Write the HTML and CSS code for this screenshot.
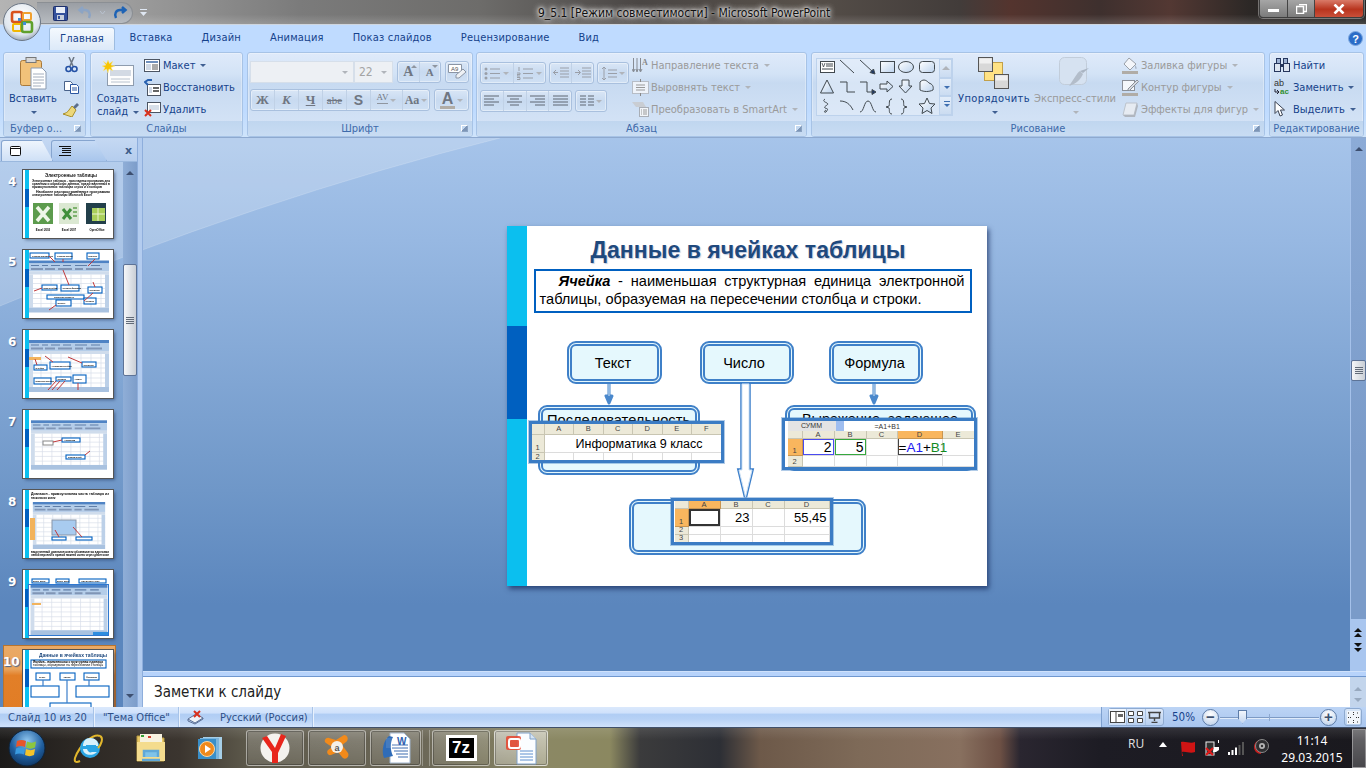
FILE: index.html
```html
<!DOCTYPE html>
<html lang="ru">
<head>
<meta charset="utf-8">
<title>9_5.1 [Режим совместимости] - Microsoft PowerPoint</title>
<link rel="stylesheet" href="styles.css">
</head>
<body>
<svg class="defs" width="0" height="0">
  <defs>
    <symbol id="mw" viewBox="0 0 80 52">
      <rect width="80" height="52" fill="#fff"/>
      <rect width="80" height="3" fill="#4f83c4"/>
      <rect y="3" width="80" height="8" fill="#b4cde9"/>
      <path d="M2 5h8M13 5h6M22 5h9M34 5h8M46 5h12M62 5h9" stroke="#5f7ea8" stroke-width="1.200"/>
      <path d="M2 8.500h12M16 8.500h10M29 8.500h14M46 8.500h8M57 8.500h16" stroke="#8095b5" stroke-width="2"/>
      <rect y="11" width="80" height="3" fill="#cfdcec"/>
      <rect y="14" width="4" height="33" fill="#cfdcec"/>
      <path d="M4 18H80M4 23H80M4 28H80M4 33H80M4 38H80M4 43H80M12 14V47M22 14V47M32 14V47M42 14V47M52 14V47M62 14V47M72 14V47" stroke="#d6dde8" stroke-width=".7"/>
      <rect x="76" y="14" width="4" height="33" fill="#bcd0e8"/>
      <rect y="47" width="80" height="5" fill="#a9c2e0"/>
    </symbol>
    <symbol id="bar" viewBox="0 0 4 68">
      <rect width="4" height="68" fill="#0bbfef"/>
      <rect y="19" width="4" height="18" fill="#0060c0"/>
    </symbol>
  </defs>
</svg>
<div class="app">
  <header class="titlebar">
    <div class="office-btn">
      <svg width="38" height="38" viewBox="0 0 38 38">
        <defs><radialGradient id="orb" cx=".5" cy=".35" r=".7"><stop offset="0" stop-color="#fff"/><stop offset=".7" stop-color="#dfe6ee"/><stop offset="1" stop-color="#8b98a8"/></radialGradient></defs>
        <circle cx="19" cy="19" r="18.500" fill="url(#orb)" stroke="#6b7685"/>
        <rect x="9" y="9" width="10" height="10" rx="2" fill="none" stroke="#d9531e" stroke-width="2.600"/>
        <rect x="20" y="10" width="8" height="7" rx="1" fill="none" stroke="#f0a030" stroke-width="2"/>
        <rect x="10" y="21" width="8" height="7" rx="1" fill="none" stroke="#f2b700" stroke-width="2"/>
        <rect x="19" y="19" width="10" height="10" rx="2" fill="none" stroke="#5fa02c" stroke-width="2.600"/>
        <path d="M20 19h3v3h-3zM15 15h3v3h-3z" fill="#3f8fd8"/>
      </svg>
    </div>
    <div class="qat">
      <svg width="15" height="15" viewBox="0 0 15 15"><rect x=".5" y=".5" width="14" height="14" rx="1" fill="#35519c" stroke="#1d2f6b"/><rect x="3" y="1" width="9" height="6" fill="#e9eef7"/><rect x="4" y="9" width="7" height="5" fill="#c8cfdc"/><rect x="5" y="10" width="2" height="3" fill="#35519c"/></svg>
      <svg class="q-undo" width="15" height="14" viewBox="0 0 15 14"><path d="M12 12c2-4 0-8-4-8H3M6 1 2.500 4 6 7" fill="none" stroke="#8ca4c4" stroke-width="2.500"/></svg>
      <svg width="7" height="4" viewBox="0 0 7 4"><path d="M1 0 3.500 3 6 0" fill="none" stroke="#b9c2cf"/></svg>
      <svg class="q-redo" width="15" height="14" viewBox="0 0 15 14"><path d="M3 12C1 8 3 4 7 4h5M9 1l3.500 3L9 7" fill="none" stroke="#1e63b5" stroke-width="2.500"/></svg>
    </div>
    <svg class="q-more" width="7" height="7" viewBox="0 0 7 7"><path d="M0 0h7v1H0zM0 3h7L3.500 7z" fill="#dfe7f2"/></svg>
    <div class="title">9_5.1 [Режим совместимости] - Microsoft PowerPoint</div>
    <div class="winctl">
      <span class="wc wc-min"><i class="wc-dash"></i></span>
      <span class="wc wc-max"><svg width="11" height="10" viewBox="0 0 11 10"><path d="M3 .5h7.500v7H8M.5 2.500h7v7h-7z" fill="none" stroke="#fff" stroke-width="1.500"/></svg></span>
      <span class="wc wc-close"><svg width="12" height="10" viewBox="0 0 12 10"><path d="M1.500 .5 10.500 9.500M10.500 .5 1.500 9.500" stroke="#fff" stroke-width="2.600"/></svg></span>
    </div>
  </header>

  <nav class="tabs">
    <span class="tab active">Главная</span>
    <span class="tab">Вставка</span>
    <span class="tab">Дизайн</span>
    <span class="tab">Анимация</span>
    <span class="tab">Показ слайдов</span>
    <span class="tab">Рецензирование</span>
    <span class="tab">Вид</span>
    <svg class="help" width="15" height="15" viewBox="0 0 15 15"><circle cx="7.500" cy="7.500" r="7" fill="#2a6cc8" stroke="#7fa8de"/><text x="7.500" y="11.500" text-anchor="middle" class="help-q">?</text></svg>
  </nav>

  <section class="ribbon">
    <div class="group g-clip">
      <div class="g-body">
        <div class="big b-paste">
          <div class="big-ico"><svg width="27" height="33" viewBox="0 0 27 33"><rect x=".5" y="3.500" width="21" height="25" rx="2" fill="#f1c27a" stroke="#a9793a"/><rect x="6" y=".5" width="10" height="5" fill="#d7d7d7" stroke="#777"/><path d="M11 11h11l4 4v17H11z" fill="#fff" stroke="#8a9ab0"/><path d="M13 17h11M13 20h11M13 23h11M13 26h11M13 29h8" stroke="#a4aebd"/></svg></div>
          <div class="big-text dk">Вставить</div>
          <div class="big-text"><i class="caret"></i></div>
        </div>
        <div class="icol">
          <span class="ico22"><svg width="13" height="16" viewBox="0 0 13 16"><path d="M4 0l4 9M9 0 5 9" stroke="#6c7684" stroke-width="1.500"/><circle cx="3.500" cy="12" r="2.500" fill="none" stroke="#2552a5" stroke-width="1.600"/><circle cx="9.500" cy="12" r="2.500" fill="none" stroke="#2552a5" stroke-width="1.600"/></svg></span>
          <span class="ico22"><svg width="15" height="13" viewBox="0 0 15 13"><path d="M.5.5h6l2 2v7h-8z" fill="#fff" stroke="#49628a"/><path d="M6.500 3.500h6l2 2v7h-8z" fill="#fff" stroke="#2c56a0"/><path d="M8 7h5M8 9h5" stroke="#2c56a0"/></svg></span>
          <span class="ico22"><svg width="16" height="15" viewBox="0 0 16 15"><path d="M10 5 14 1l2 2-4 4z" fill="#5b6e8c"/><path d="M9 4l4 4-4 7-9-3c3-1 5-2 6-4z" fill="#ecd77a" stroke="#a98f2c"/></svg></span>
        </div>
      </div>
      <div class="g-label">Буфер о...<i class="launch"></i></div>
    </div>

    <div class="group g-slides">
      <div class="g-body">
        <div class="big b-new">
          <div class="big-ico"><svg width="32" height="26" viewBox="0 0 32 26"><rect x="5.500" y="5.500" width="26" height="20" fill="#fdfdfd" stroke="#8e9cae"/><rect x="8" y="10" width="21" height="6" fill="#d3dae4"/><path d="M9 19h19M9 22h19" stroke="#b8c2ce"/><path d="M6 0l1.500 3.500L11 1 9 5l4 1-4 1.500L11 11 7 9 6 13 4.500 9 1 11l2-3.500L0 6l4-1L1 1l3.500 2.500z" fill="#f7c400" stroke="#f2e9a6" stroke-width=".5"/></svg></div>
          <div class="big-text dk">Создать</div>
          <div class="big-text dk">слайд <i class="caret"></i></div>
        </div>
        <div class="scol">
          <div class="sm dk"><span class="sm-ico"><svg width="16" height="13" viewBox="0 0 16 13"><rect x=".5" y=".5" width="15" height="12" fill="#fff" stroke="#4c5563"/><rect x="2" y="2" width="12" height="2" fill="#6e8fbd"/><rect x="2" y="5" width="5" height="6" fill="#cfd8e5"/><path d="M8 6h6M8 8h6M8 10h6" stroke="#555"/></svg></span>Макет <i class="caret"></i></div>
          <div class="sm dk"><span class="sm-ico"><svg width="17" height="17" viewBox="0 0 17 17"><rect x="3.500" y="5.500" width="13" height="11" fill="#fff" stroke="#4c5563"/><rect x="9" y="8" width="6" height="2" fill="#666"/><rect x="9" y="11" width="6" height="2" fill="#666"/><rect x="5" y="8" width="3" height="6" fill="#cfd8e5"/><path d="M8 1H4L1 3l3 3" fill="none" stroke="#2760b0" stroke-width="2"/></svg></span>Восстановить</div>
          <div class="sm dk"><span class="sm-ico"><svg width="17" height="15" viewBox="0 0 17 15"><rect x="3.500" y=".5" width="13" height="10" fill="#fff" stroke="#4c5563"/><rect x="5" y="3" width="10" height="5" fill="#d7dfe9"/><path d="M1 8l6 6M7 8l-6 6" stroke="#d8301c" stroke-width="2"/></svg></span>Удалить</div>
        </div>
      </div>
      <div class="g-label">Слайды</div>
    </div>

    <div class="group g-font">
      <div class="g-body rows">
        <div class="row">
          <span class="combo c-name"><i class="caret gr"></i></span>
          <span class="combo c-size">22<i class="caret gr"></i></span>
          <span class="bgrp bg-grow"><span class="btn f-a1">A<i class="up"></i></span><span class="btn f-a2">A<i class="up dn"></i></span></span>
          <span class="bgrp bg-clear"><span class="btn"><svg width="19" height="16" viewBox="0 0 19 16"><path d="M.5.5h13v8h-13z" fill="#fff" stroke="#8b95a4"/><text x="3" y="7" class="mini-a">A9</text><path d="M8 11 15 5l3 3-7 6H8z" fill="#eef1f5" stroke="#8b95a4"/></svg></span></span>
        </div>
        <div class="row">
          <span class="bgrp bg-fmt">
            <span class="btn w24 fb">Ж</span><span class="btn w24 fbi">К</span><span class="btn w24 fu">Ч</span><span class="btn w24 fs">abe</span><span class="btn w24 fb2">S</span>
            <span class="btn w32"><span class="fav">AV<i class="av"></i></span><i class="caret gr"></i></span><span class="btn w28 fa">Aa<i class="caret gr"></i></span>
          </span>
          <span class="bgrp bg-color"><span class="btn"><span class="fcol">A</span><i class="caret gr"></i></span></span>
        </div>
      </div>
      <div class="g-label">Шрифт<i class="launch"></i></div>
    </div>

    <div class="group g-para">
      <div class="g-body para">
        <div class="rows">
          <div class="row rp">
            <span class="bgrp bg-list">
              <span class="btn w33"><svg width="17" height="13" viewBox="0 0 17 13"><path d="M6 2h10M6 6.500h10M6 11h10" stroke="#9a9fa8"/><circle cx="2" cy="2" r="1.500" fill="#9a9fa8"/><circle cx="2" cy="6.500" r="1.500" fill="#9a9fa8"/><circle cx="2" cy="11" r="1.500" fill="#9a9fa8"/></svg><i class="caret gr"></i></span>
              <span class="btn w33"><svg width="17" height="13" viewBox="0 0 17 13"><path d="M6 2h10M6 6.500h10M6 11h10" stroke="#9a9fa8"/><path d="M2 0v4M0 6h3v1.500H0V9h3M0 10.500h3v2H0" fill="none" stroke="#9a9fa8"/></svg><i class="caret gr"></i></span>
            </span>
            <span class="bgrp bg-ind">
              <span class="btn"><svg width="16" height="13" viewBox="0 0 16 13"><path d="M7 1h9M7 4h9M7 7h9M7 10h9M0 5.500h5M3 3 .5 5.500 3 8" fill="none" stroke="#9a9fa8"/></svg></span>
              <span class="btn"><svg width="16" height="13" viewBox="0 0 16 13"><path d="M7 1h9M7 4h9M7 7h9M7 10h9M0 5.500h5M3 3l2.500 2.500L3 8" fill="none" stroke="#9a9fa8"/></svg></span>
            </span>
            <span class="bgrp bg-ls"><span class="btn"><svg width="16" height="15" viewBox="0 0 16 15"><path d="M3 1v13M1 3l2-2 2 2M1 12l2 2 2-2M7 4h9M7 7.500h9M7 11h9" fill="none" stroke="#9a9fa8"/></svg><i class="caret gr"></i></span></span>
          </div>
          <div class="row rp">
            <span class="bgrp bg-align">
              <span class="btn"><svg width="15" height="12" viewBox="0 0 15 12"><path d="M0 1h15M0 4h10M0 7h15M0 10h10" stroke="#5f6672"/></svg></span>
              <span class="btn"><svg width="15" height="12" viewBox="0 0 15 12"><path d="M0 1h15M3 4h9M0 7h15M3 10h9" stroke="#5f6672"/></svg></span>
              <span class="btn"><svg width="15" height="12" viewBox="0 0 15 12"><path d="M0 1h15M5 4h10M0 7h15M5 10h10" stroke="#5f6672"/></svg></span>
              <span class="btn"><svg width="15" height="12" viewBox="0 0 15 12"><path d="M0 1h15M0 4h15M0 7h15M0 10h15" stroke="#5f6672"/></svg></span>
            </span>
            <span class="bgrp bg-cols"><span class="btn"><svg width="14" height="12" viewBox="0 0 14 12"><path d="M0 1h6M0 4h6M0 7h6M0 10h6M8 1h6M8 4h6M8 7h6M8 10h6" stroke="#5f6672"/></svg><i class="caret gr"></i></span></span>
          </div>
        </div>
        <div class="scol sc-p">
          <div class="sm dis"><span class="sm-ico"><svg width="17" height="17" viewBox="0 0 17 17"><path d="M1.500 1v13M5 1v13M8.500 1v13M0 12l1.500 3L3 12M4 12l1 3 1-3M7 12l1.500 3L10 12" fill="none" stroke="#878c94"/><text x="10" y="8" class="mini-b">A</text></svg></span>Направление текста <i class="caret gr"></i></div>
          <div class="sm dis"><span class="sm-ico"><svg width="17" height="17" viewBox="0 0 17 17"><rect x=".5" y="2.500" width="16" height="12" fill="#eef3fa" stroke="#b7bdc6"/><path d="M4 6h9M4 8.500h9M4 11h9" stroke="#999"/><path d="M8.500 0v3M8.500 14v3" stroke="#888"/></svg></span>Выровнять текст <i class="caret gr"></i></div>
          <div class="sm dis"><span class="sm-ico"><svg width="17" height="16" viewBox="0 0 17 16"><path d="M0 1h11l3 5H4z" fill="#c9cdd3"/><rect x="7.500" y="6.500" width="9" height="9" fill="#f2f5f9" stroke="#a9aeb6"/><path d="M9 9h1M11 9h4M9 11h1M11 11h4M9 13h1M11 13h4" stroke="#999"/></svg></span>Преобразовать в SmartArt <i class="caret gr"></i></div>
        </div>
      </div>
      <div class="g-label">Абзац<i class="launch"></i></div>
    </div>

    <div class="group g-draw">
      <div class="g-body draw">
        <div class="gallery">
          <svg width="123" height="58" viewBox="0 0 123 58" class="shapes">
            <g fill="none" stroke="#41494f">
              <rect x="4.500" y="3.500" width="14" height="11" fill="#fff"/><path d="M10 6h7M10 8h7M6 11h11" /><path d="M6 5l1.500 4L9 5" stroke-width=".8"/>
              <path d="M24 2l14 13"/><path d="M44 2l13 12"/><path d="M59 16l-5-1.500 3.500-3.500z" fill="#1f3864"/>
              <defs><linearGradient id="fl" x1="0" y1="0" x2="1" y2="1"><stop offset="0" stop-color="#fff"/><stop offset="1" stop-color="#bcd3ee"/></linearGradient></defs>
              <rect x="64.500" y="3.500" width="14" height="11" fill="url(#fl)"/>
              <ellipse cx="90" cy="9" rx="7.500" ry="5.500" fill="url(#fl)"/>
              <rect x="103.500" y="3.500" width="15" height="11" rx="3" fill="url(#fl)"/>
              <path d="M11 22l6.500 13h-13z" fill="url(#fl)"/>
              <path d="M24 24h7v10h8"/><path d="M44 24h7v10h6"/><path d="M60 34l-4-2.500v5z" fill="#1f3864"/>
              <path d="M64 26h7v-3l6 5.500-6 5.500v-3h-7z" fill="url(#fl)"/>
              <path d="M86 22h7v6h3l-6.500 7-6.500-7h3z" fill="url(#fl)"/>
              <path d="M104 24c4-4 7-1 9 1 3 1 5 3 4 7-4 2-9 2-13 0z" fill="url(#fl)"/>
              <path d="M9 41c-3 2 0 3 2 4 3 2-4 3-2 5 2 1 4 0 1 4-2 1-2-1 0-2" />
              <path d="M24 43c6 0 10 3 13 9"/><path d="M44 54c4 0 4-11 8-11 4 0 4 11 8 11"/>
              <path d="M76 41c-4 0-2 6-3 7l-3 1 3 1c1 1-1 6 3 6"/><path d="M85 41c4 0 2 6 3 7l3 1-3 1c-1 1 1 6-3 6"/>
              <path d="M111 40l2.500 5.500 5.500.5-4 4 1 5.500-5-3-5 3 1-5.500-4-4 5.500-.5z" fill="url(#fl)"/>
            </g>
          </svg>
          <div class="gscroll"><span class="gs"><i class="up2"></i></span><span class="gs"><i class="caret bl"></i></span><span class="gs"><i class="caret bl barred"></i></span></div>
        </div>
        <div class="big b-arr">
          <div class="big-ico"><svg width="32" height="32" viewBox="0 0 32 32"><rect x="6.500" y="5.500" width="18" height="18" fill="#ffe284" stroke="#c2a04a"/><rect x=".5" y=".5" width="14" height="14" fill="#d8d8d8" stroke="#555"/><rect x="1.500" y="1.500" width="12" height="5" fill="#f0f0f0"/><rect x="16.500" y="17.500" width="14" height="14" fill="#d8d8d8" stroke="#555"/><rect x="17.500" y="18.500" width="12" height="5" fill="#f0f0f0"/></svg></div>
          <div class="big-text dk">Упорядочить</div>
          <div class="big-text"><i class="caret"></i></div>
        </div>
        <div class="big b-sty dis">
          <div class="big-ico"><svg width="32" height="32" viewBox="0 0 32 32"><rect x=".5" y=".5" width="27" height="27" rx="5" fill="#d6e2f1" stroke="#c2cdda"/><path d="M30 11 24 16l-3-2z" fill="#a9b4c2"/><path d="M21 14l3 3c-2 5-7 10-14 12 2-3 4-6 6-9 2-3 3-5 5-6z" fill="#b3bdca"/></svg></div>
          <div class="big-text">Экспресс-стили</div>
          <div class="big-text"><i class="caret gr"></i></div>
        </div>
        <div class="scol sc-d">
          <div class="sm dis"><span class="sm-ico si16"><svg width="17" height="17" viewBox="0 0 17 17"><path d="M7 1l7 6-6 6-6-6z" fill="#f4f6fa" stroke="#9aa0a8"/><path d="M13 8c2 2 2 4 1 4s-1-2-1-4z" fill="#a9b4c2"/><rect y="14" width="16" height="3" fill="#b0aca6"/></svg></span>Заливка фигуры <i class="caret gr"></i></div>
          <div class="sm dis"><span class="sm-ico si16"><svg width="17" height="17" viewBox="0 0 17 17"><rect x=".5" y="1.500" width="12" height="10" fill="#f4f7fb" stroke="#8b9098"/><path d="M6 10 15 1l1.500 1.500-9 9H6z" fill="#d8dce2" stroke="#8b9098"/><rect y="14" width="16" height="3" fill="#b0aca6"/></svg></span>Контур фигуры <i class="caret gr"></i></div>
          <div class="sm dis"><span class="sm-ico si16"><svg width="17" height="15" viewBox="0 0 17 15"><path d="M4 1h11l-3 12H1z" fill="#e6ebf2" stroke="#bcc3cc"/><path d="M1 13h11l3-12 1 3-3 11H3z" fill="#b0b6bf"/></svg></span>Эффекты для фигур <i class="caret gr"></i></div>
        </div>
      </div>
      <div class="g-label">Рисование<i class="launch"></i></div>
    </div>

    <div class="group g-edit">
      <div class="g-body">
        <div class="scol sc-e">
          <div class="sm dk"><span class="sm-ico si16"><svg width="16" height="14" viewBox="0 0 16 14"><rect x="2.500" y=".5" width="4" height="5" fill="#9db2d4" stroke="#26365c"/><rect x="9.500" y=".5" width="4" height="5" fill="#9db2d4" stroke="#26365c"/><rect x=".5" y="5.500" width="6" height="8" fill="#dde5f1" stroke="#26365c"/><rect x="9.500" y="5.500" width="6" height="8" fill="#dde5f1" stroke="#26365c"/><rect x="6" y="6" width="4" height="3" fill="#26365c"/></svg></span>Найти</div>
          <div class="sm dk"><span class="sm-ico si16"><svg width="17" height="16" viewBox="0 0 17 16"><text x="0" y="7" class="mini-ab">ab</text><text x="6" y="15" class="mini-ac">ac</text><path d="M1 10v3h4M3 11l2 2-2 2" fill="none" stroke="#223" /></svg></span>Заменить <i class="caret"></i></div>
          <div class="sm dk"><span class="sm-ico si16"><svg width="11" height="16" viewBox="0 0 11 16"><path d="M1 .5v12l3-3 2 5.500 2.500-1-2-5h4z" fill="#fff" stroke="#3a4252"/></svg></span>Выделить <i class="caret"></i></div>
        </div>
      </div>
      <div class="g-label">Редактирование</div>
    </div>
  </section>

  <main class="main">
    <svg class="sweep" width="600" height="190" viewBox="0 0 600 190"><path d="M0 168Q260 60 500 0H0z" fill="#fff" fill-opacity=".2"/><path d="M0 168Q260 60 500 0" fill="none" stroke="#fff" stroke-opacity=".18"/></svg>
    <aside class="panel">
      <div class="pcol">
        <div class="ptabs">
          <span class="ptab ptab-a"><svg width="11" height="10" viewBox="0 0 11 10"><rect x=".5" y=".5" width="10" height="9" rx="1" fill="#fff" stroke="#111"/><path d="M1 2.500h9" stroke="#111"/></svg></span>
          <span class="ptab ptab-b"><svg width="12" height="10" viewBox="0 0 12 10"><path d="M0 .5h12M3 2.500h9M3 4.500h9M3 6.500h9M0 9.500h12" stroke="#111"/></svg></span>
          <span class="pclose">x</span>
        </div>
        <div class="pbody">
          <div class="tlist">
            <div class="titem"><span class="tnum">4</span>
              <svg class="thumb" viewBox="0 0 90 68" width="90" height="68">
                <rect width="90" height="68" fill="#fff"/><use href="#bar" x="2" width="4" height="68"/>
                <text x="48" y="7" class="tt tc" textLength="52" lengthAdjust="spacingAndGlyphs">Электронные таблицы</text>
                <text x="9" y="12" class="tx b" textLength="78" lengthAdjust="spacingAndGlyphs">Электронные таблицы - прикладная программа для</text>
                <text x="9" y="15" class="tx b" textLength="78" lengthAdjust="spacingAndGlyphs">хранения и обработки данных, представленных в</text>
                <text x="9" y="18" class="tx b" textLength="70" lengthAdjust="spacingAndGlyphs">прямоугольных таблицах строк и столбцов</text>
                <text x="13" y="23" class="tx b" textLength="74" lengthAdjust="spacingAndGlyphs">Наиболее распространённые программы</text>
                <text x="9" y="26" class="tx b" textLength="60" lengthAdjust="spacingAndGlyphs">электронные таблицы Microsoft Excel</text>
                <rect x="10" y="33" width="20" height="21" fill="#5c9b4d"/><path d="M14 37l12 14M26 37 14 51" stroke="#eef6e8" stroke-width="3.500"/>
                <rect x="36" y="33" width="20" height="21" fill="#dbe8d2"/><path d="M40 39l8 10M48 39l-8 10" stroke="#3f8f3a" stroke-width="3"/><path d="M50 38h4M50 42h4M50 46h4" stroke="#7fb36f" stroke-width="2"/>
                <rect x="63" y="33" width="20" height="21" fill="#223f4a"/><rect x="69" y="38" width="13" height="13" fill="#a9cf5a"/><path d="M75 38v13M69 44h13" stroke="#eaf4d2"/>
                <text x="20" y="61" class="tx tc b">Excel 2003</text><text x="46" y="61" class="tx tc b">Excel 2007</text><text x="74" y="61" class="tx tc b">OpenOffice</text>
              </svg>
            </div>
            <div class="titem"><span class="tnum">5</span>
              <svg class="thumb" viewBox="0 0 90 68" width="90" height="68">
                <rect width="90" height="68" fill="#fff"/><use href="#bar" x="2" width="4" height="68"/>
                <use href="#mw" x="6" y="10" width="80" height="53"/>
                <g class="tb"><rect x="7" y="3" width="19" height="5"/><rect x="32" y="3" width="17" height="6"/><rect x="64" y="3" width="12" height="6"/><rect x="19" y="35" width="15" height="5"/><rect x="38" y="35" width="18" height="6"/><rect x="65" y="37" width="14" height="6"/><rect x="24" y="45" width="37" height="4"/><rect x="33" y="50" width="15" height="6"/><rect x="61" y="48" width="12" height="6"/></g>
                <g class="tl"><text x="9" y="6.500">Строка заголовка</text><text x="34" y="7">Строка меню</text><text x="65.500" y="7">Панель</text><text x="20.500" y="38.500">Имя ячейки</text><text x="39.500" y="39">Строка формул</text><text x="66.500" y="41">Столбец</text><text x="31" y="48">Рабочая область</text><text x="34.500" y="54">Листы</text><text x="62.500" y="52">Строка</text></g>
                <path class="tr" d="M26 6l6 6M40 9v3M72 9l-7 7M19 38l-8 3M46 35 40 20M72 37l-2-5M61 51l9-8M33 55l-7 5" />
              </svg>
            </div>
            <div class="titem"><span class="tnum">6</span>
              <svg class="thumb" viewBox="0 0 90 68" width="90" height="68">
                <rect width="90" height="68" fill="#fff"/><use href="#bar" x="2" width="4" height="68"/>
                <use href="#mw" x="6" y="10" width="80" height="52"/>
                <rect x="6" y="27" width="12" height="3" fill="#f2b35c"/>
                <g class="tb"><rect x="11" y="35" width="13" height="5"/><rect x="27" y="32" width="20" height="7"/><rect x="59" y="32" width="14" height="5"/><rect x="11" y="48" width="17" height="6"/><rect x="33" y="47" width="15" height="4"/><rect x="50" y="45" width="13" height="8"/></g>
                <g class="tl"><text x="12.500" y="38.500">Ячейка</text><text x="28.500" y="36.500">Активная ячейка</text><text x="60.500" y="35.500">Столбец</text><text x="12.500" y="52">Ярлыки листов</text><text x="34.500" y="50">Строка</text><text x="51.500" y="50">Адрес</text></g>
                <path class="tr" d="M14 35l-2-6M30 32l-8-6M59 33 45 27M33 51l-8 9M37 51l-8 9M42 51l-8 9M55 53v7" />
              </svg>
            </div>
            <div class="titem"><span class="tnum">7</span>
              <svg class="thumb" viewBox="0 0 90 68" width="90" height="68">
                <rect width="90" height="68" fill="#fff"/><use href="#bar" x="2" width="4" height="68"/>
                <use href="#mw" x="8" y="8" width="76" height="54"/>
                <rect x="20" y="31" width="10" height="4" fill="#fff" stroke="#888"/>
                <g class="tb"><rect x="39" y="28" width="18" height="4"/><rect x="43" y="45" width="19" height="4"/></g>
                <g class="tl"><text x="41" y="31">Активная</text><text x="45" y="48">Табличный</text></g>
                <path class="tr" d="M30 32l9-2M62 45l5-4" />
              </svg>
            </div>
            <div class="titem"><span class="tnum">8</span>
              <svg class="thumb" viewBox="0 0 90 68" width="90" height="68">
                <rect width="90" height="68" fill="#fff"/><use href="#bar" x="2" width="4" height="68"/>
                <text x="8" y="5" class="tx b" textLength="78" lengthAdjust="spacingAndGlyphs">Диапазон - прямоугольная часть таблицы из</text><text x="8" y="9" class="tx b">нескольких ячеек</text>
                <use href="#mw" x="7" y="12" width="78" height="47"/>
                <rect x="7" y="28" width="5" height="22" fill="#f2b35c"/>
                <rect x="29" y="30" width="24" height="15" fill="#a8cbef" stroke="#8895a8"/>
                <g class="tb"><rect x="29" y="47" width="14" height="3"/><rect x="53" y="47" width="16" height="3"/></g>
                <path class="tr" d="M36 47l-4-7M59 47l-9-10"/>
                <text x="8" y="63" class="tx b" textLength="78" lengthAdjust="spacingAndGlyphs">выделенный диапазон ячеек обозначается адресами</text><text x="8" y="66" class="tx b" textLength="78" lengthAdjust="spacingAndGlyphs">левой верхней и правой нижней ячеек через двоеточие</text>
              </svg>
            </div>
            <div class="titem"><span class="tnum">9</span>
              <svg class="thumb" viewBox="0 0 90 68" width="90" height="68">
                <rect width="90" height="68" fill="#fff"/><use href="#bar" x="2" width="4" height="68"/>
                <use href="#mw" x="6" y="15" width="80" height="50"/>
                <g class="tb"><rect x="9" y="9" width="17" height="4"/><rect x="33" y="9" width="13" height="4"/><rect x="56" y="9" width="27" height="4"/></g>
                <g class="tl"><text x="10" y="12">Excel 2003</text><text x="34" y="12">Excel 2007</text><text x="58" y="12">OpenOffice Calc</text></g>
                <rect x="5.500" y="14.500" width="80" height="51" fill="none" stroke="#2f78d0"/>
                <rect x="70" y="62" width="15" height="3" fill="#2f8ee0"/>
                <rect x="9" y="33" width="9" height="2" fill="#f2b35c"/>
              </svg>
            </div>
            <div class="titem sel"><span class="tnum">10</span>
              <svg class="thumb" viewBox="0 0 90 68" width="90" height="68">
                <rect width="90" height="68" fill="#fff"/><use href="#bar" x="2" width="4" height="68"/>
                <text x="50" y="7" class="tt tc blu">Данные в ячейках таблицы</text>
                <g class="tb"><rect x="8" y="10" width="75" height="8"/><rect x="13" y="23" width="14" height="7"/><rect x="37" y="23" width="15" height="7"/><rect x="61" y="23" width="15" height="7"/><rect x="8" y="36" width="28" height="11"/><rect x="53" y="36" width="33" height="11"/><rect x="27" y="53" width="41" height="12"/></g>
                <text x="10" y="13" class="tx b" textLength="70" lengthAdjust="spacingAndGlyphs">Ячейка - наименьшая структурная единица</text><text x="10" y="16" class="tx" textLength="70" lengthAdjust="spacingAndGlyphs">таблицы, образуемая на пересечении столбца</text>
                <g class="tl"><text x="16" y="27.500">Текст</text><text x="40" y="27.500">Число</text><text x="63" y="27.500">Формула</text></g>
                <path d="M20 30v6M66 30v6M44 30v23" class="tg"/>
              </svg>
            </div>
          </div>
          <div class="vs vs-p"><i class="sa-up"></i><span class="th th-p"><i class="grip"></i></span><i class="sa-dn"></i></div>
        </div>
      </div>
      <div class="pstrip"></div>
    </aside>

    <div class="work">
      <div class="work-top">
        <div class="editor">
          <article class="slide">
            <div class="sbar"><i></i></div>
            <h1 class="s-title">Данные в ячейках таблицы</h1>
            <p class="s-def"><b>Ячейка</b> - наименьшая структурная единица электронной таблицы, образуемая на пересечении столбца и строки.</p>

            <div class="node n-text">Текст</div>
            <div class="node n-num">Число</div>
            <div class="node n-form">Формула</div>

            <svg class="arrows" width="480" height="360" viewBox="0 0 480 360">
              <path class="ar-o" d="M102 158v12M99 170h6l-3 7zM367 158v12M364 170h6l-3 7z"/>
              <path class="ar-i" d="M102 158v12M367 158v12"/>
            </svg>

            <div class="node n-seq">Последовательность<br><br>символов</div>
            <div class="node n-expr">Выражение, задающее</div>
            <div class="node n-dec"></div>

            <svg class="arrows" width="480" height="360" viewBox="0 0 480 360">
              <path class="ar-big" d="M235 158v86h-3l6.500 27 6.500-27h-3v-86z"/>
              <path class="ar-big2" d="M235 158v86h-3l6.500 27 6.500-27h-3v-86z"/>
            </svg>

            <div class="sheet sh1">
              <span class="h"></span><span class="h">A</span><span class="h">B</span><span class="h">C</span><span class="h">D</span><span class="h">E</span><span class="h">F</span>
              <span class="h rn">1</span><span class="c wide">Информатика 9 класс</span>
              <span class="h rn">2</span><span class="c"></span><span class="c"></span><span class="c"></span><span class="c"></span><span class="c"></span><span class="c"></span>
            </div>

            <div class="sheet sh2">
              <div class="fbar"><span class="nm">СУММ</span><i class="dd"></i><span class="fx">=A1+B1</span></div>
              <span class="h"></span><span class="h">A</span><span class="h">B</span><span class="h">C</span><span class="h og">D</span><span class="h">E</span>
              <span class="h rn og">1</span><span class="c r val bl1">2</span><span class="c r val gr1">5</span><span class="c"></span><span class="c val act"><em class="fa1">=</em><em class="fb1">A1</em><em class="fa1">+</em><em class="fc1">B1</em></span><span class="c"></span>
              <span class="h rn">2</span><span class="c"></span><span class="c"></span><span class="c"></span><span class="c"></span><span class="c"></span>
            </div>

            <div class="sheet sh3">
              <span class="h"></span><span class="h og">A</span><span class="h">B</span><span class="h">C</span><span class="h">D</span>
              <span class="h rn og">1</span><span class="c act"></span><span class="c r val">23</span><span class="c"></span><span class="c r val">55,45</span>
              <span class="h rn">2</span><span class="c"></span><span class="c"></span><span class="c"></span><span class="c"></span>
              <span class="h rn">3</span><span class="c"></span><span class="c"></span><span class="c"></span><span class="c"></span>
            </div>
          </article>
        </div>
        <div class="vs vs-m">
          <i class="sa-up"></i><span class="th th-m"><i class="grip"></i></span>
          <div class="navz"><i class="nv nv-u"></i><i class="nv nv-d"></i></div>
        </div>
      </div>
      <div class="split"></div>
      <div class="notes-row">
        <div class="notes">Заметки к слайду</div>
        <div class="vs vs-n"><i class="sa-up g"></i><i class="sa-dn g"></i></div>
      </div>
    </div>
  </main>

  <footer class="status">
    <span class="st st1">Слайд 10 из 20</span>
    <span class="st st2">"Тема Office"</span>
    <span class="st st3"><svg width="17" height="15" viewBox="0 0 17 15"><path d="M1 9l8-5 7 4-8 5z" fill="#eef2f7" stroke="#5b6f95"/><path d="M1 9v2l7 3 8-5V8" fill="none" stroke="#5b6f95"/><path d="M7 1l6 6M13 1 7 7" stroke="#d8301c" stroke-width="2"/></svg></span>
    <span class="st st4">Русский (Россия)</span>
    <span class="st-fill"></span>
    <div class="st-right">
      <div class="views">
        <span class="vw on"><svg width="15" height="12" viewBox="0 0 15 12"><rect x=".5" y=".5" width="14" height="11" fill="#fff" stroke="#444"/><path d="M6 1v10" stroke="#444"/><rect x="8" y="3" width="5" height="3" fill="#666"/></svg></span>
        <span class="vw"><svg width="15" height="12" viewBox="0 0 15 12"><path d="M.5.5h5v4h-5zM9.500.5h5v4h-5zM.5 7.500h5v4h-5zM9.500 7.500h5v4h-5z" fill="#fff" stroke="#444"/></svg></span>
        <span class="vw"><svg width="15" height="12" viewBox="0 0 15 12"><path d="M1 1.500h13M2.500 2v5h10V2M7.500 7v3M4.500 11.500h6" fill="none" stroke="#444" stroke-width="1.400"/></svg></span>
      </div>
      <span class="zoomv">50%</span>
      <span class="zbtn">−</span>
      <span class="slider"><i class="tick"></i><i class="knob"></i></span>
      <span class="zbtn">+</span>
      <span class="fit"><svg width="15" height="15" viewBox="0 0 15 15"><rect x="1" y="1" width="13" height="13" fill="#f2f6fb"/><path d="M7.500 2v3M7.500 10v3M2 7.500h3M10 7.500h3M2 3h2M11 3h2M2 12h2M11 12h2" stroke="#333" stroke-dasharray="1 1"/></svg></span>
    </div>
  </footer>

  <div class="taskbar">
    <span class="orb"><svg width="38" height="38" viewBox="0 0 38 38"><defs><radialGradient id="sb" cx=".5" cy=".3" r=".8"><stop offset="0" stop-color="#8fc6ef"/><stop offset=".55" stop-color="#1f5e9e"/><stop offset="1" stop-color="#0b2a50"/></radialGradient></defs><circle cx="19" cy="19" r="18" fill="url(#sb)" stroke="#0e2238"/><path d="M9 12c3-1.500 6-1.500 9 0l-1 6c-3-1.500-6-1.500-9 0z" fill="#e8552a"/><path d="M19 12.500c3 1.500 6 1.500 9 0l-1 6c-3 1.500-6 1.500-9 0z" fill="#8cc63f"/><path d="M8 19.500c3-1.500 6-1.500 9 0l-1 6c-3-1.500-6-1.500-9 0z" fill="#3a9be0"/><path d="M18 20c3 1.500 6 1.500 9 0l-1 6c-3 1.500-6 1.500-9 0z" fill="#f6c42a"/></svg></span>
    <span class="tk ti-e"><svg width="32" height="32" viewBox="0 0 32 32"><path d="M27 4C21 1 7 12 2 26c-1 4 1 5 5 3" fill="none" stroke="#e2b72c" stroke-width="2"/><circle cx="17" cy="16" r="10" fill="#2aa5e4"/><path d="M10 14h15c1-5-3-8-8-8-4 0-7 3-7 8zm0 3c0 6 9 8 14 3h-5c-2 1-4 0-5-3z" fill="#d8f1fb"/><rect x="13" y="13" width="10" height="3" fill="#2aa5e4"/><path d="M27 4c4 2 1 9-2 12" fill="none" stroke="#e2b72c" stroke-width="2"/></svg></span>
    <span class="tk ti-f"><svg width="32" height="30" viewBox="0 0 32 30"><path d="M2 3h10l2 2h15v23H2z" fill="#e8c867" stroke="#b89a40"/><rect x="5" y="1" width="22" height="8" fill="#f7f2df"/><rect x="6" y="2" width="3" height="2" fill="#35a035"/><rect x="13" y="3" width="3" height="2" fill="#d04030"/><rect x="2" y="9" width="28" height="19" fill="#f4dc8e"/><path d="M9 24v-6h14v6M7 27h18" fill="#7fc3e8" stroke="#5fa8d8" stroke-width="2.500"/></svg></span>
    <span class="tk ti-m"><svg width="26" height="26" viewBox="0 0 26 26"><rect x="6" y="2" width="19" height="22" fill="#a6cfe8"/><rect x="3" y="3" width="19" height="21" fill="#7cb5dc"/><rect x="1" y="4" width="18" height="20" fill="#3a8fc8"/><circle cx="10" cy="14" r="7.500" fill="#f08a1c" stroke="#f8d8a8"/><path d="M8 10l6 4-6 4z" fill="#fff"/></svg></span>
    <span class="tbtn tb-y"><svg width="30" height="30" viewBox="0 0 30 30"><circle cx="15" cy="15" r="14.500" fill="#f4f2ee"/><path d="M2 5l5-2 8 12 6-14 5 2-8 17v10h-6V19z" fill="#e8261c"/></svg></span>
    <span class="tbtn tb-a"><svg width="30" height="30" viewBox="0 0 30 30"><path d="M22 2c4 0 5 5 2 7l-4 3 6 8c2 4-3 8-6 4l-4-5-7 3c-3 1-5-3-3-5l4-3-6-4c-3-2 0-6 3-5l7 2z" fill="#f28a1a"/><circle cx="15" cy="14" r="6" fill="#f4f0e8"/><text x="15" y="18" text-anchor="middle" class="av-a">a</text></svg></span>
    <span class="tbtn tb-w"><svg width="32" height="32" viewBox="0 0 32 32"><path d="M10 1h14l6 6v24H10z" fill="#fff" stroke="#9fb3cc"/><path d="M12 13h16M12 16h16M14 19h14M16 22h12M18 25h10" stroke="#3d6cb0" stroke-width="1.200"/><path d="M9 4C4 8 1 18 4 26l9-2c-3-6-3-13 0-19z" fill="#2f6cb8"/><rect x="6" y="6" width="16" height="10" fill="#fff" fill-opacity=".1"/><text x="17" y="13" class="w-w">W</text></svg></span>
    <span class="tsep"></span>
    <span class="tbtn tb-7"><span class="sevenz">7z</span></span>
    <span class="tbtn tb-p"><svg width="32" height="34" viewBox="0 0 32 34"><path d="M12 2h13l6 6v25H12z" fill="#fbfdff" stroke="#7fa0c8"/><path d="M25 2v6h6" fill="#d7e5f4" stroke="#7fa0c8"/><path d="M15 20h13M15 23h13M15 26h13M15 29h13" stroke="#5e8fce"/><rect x="1" y="5" width="15" height="14" rx="2" fill="#e8442e" fill-opacity=".85"/><rect x="4" y="8" width="11" height="9" rx="2" fill="none" stroke="#fff" stroke-width="2"/></svg></span>
    <span class="tk-fill"></span>
    <div class="tray">
      <span class="lang">RU</span>
      <svg class="tr-up" width="8" height="5" viewBox="0 0 8 5"><path d="M0 5l4-5 4 5z" fill="#fff"/></svg>
      <svg class="tr-i" width="16" height="15" viewBox="0 0 16 15"><path d="M1 1c5-1 9 2 14 0v10c-5 2-9-1-13 0l1 4H2z" fill="#cf1414"/></svg>
      <svg class="tr-i" width="15" height="17" viewBox="0 0 15 17"><rect x="1" y="3" width="8" height="13" fill="#333" stroke="#eee"/><path d="M9 4h4V1h1v3M9 8h5v3l-3 2H8z" fill="#fff"/><path d="M1 9l7 7M8 9l-7 7" stroke="#e01818" stroke-width="2"/></svg>
      <svg class="tr-i" width="16" height="13" viewBox="0 0 16 13"><path d="M0 10h2v3H0zM3.500 8h2v5h-2zM7 5.500h2V13H7z" fill="#fff"/><path d="M10.500 3h2v10h-2zM14 0h2v13h-2z" fill="#555"/></svg>
      <svg class="tr-i" width="16" height="16" viewBox="0 0 16 16"><path d="M1 8c0-4 3-7 7-7v14c-4 0-7-3-7-7z" fill="#c81c1c"/><circle cx="9" cy="7" r="6.500" fill="#2e2e30" stroke="#8a8a8a"/><circle cx="9" cy="7" r="3" fill="#b5b5b5"/><circle cx="9" cy="7" r="1.200" fill="#333"/></svg>
      <div class="clock"><span>11:14</span><span>29.03.2015</span></div>
      <span class="showd"></span>
    </div>
  </div>
</div>
</body>
</html>
```

FILE: styles.css
```css
* { box-sizing: border-box; }
html, body { margin: 0; padding: 0; }
body { width: 1366px; height: 768px; overflow: hidden; font-family: "DejaVu Sans Condensed", "DejaVu Sans", sans-serif; font-stretch: condensed; font-size: 11px; background: #3a3a3a; }
i, em { font-style: normal; display: inline-block; }
.defs { position: absolute; }
.app { width: 1366px; height: 768px; display: flex; flex-direction: column; position: relative; overflow: hidden; }

/* title bar */
.titlebar { height: 25px; flex: none; display: flex; align-items: center; position: relative; padding-left: 53px; border-bottom: 1px solid #cfd6df;
  background:
    linear-gradient(to bottom, rgba(255,255,255,0) 60%, rgba(255,255,255,.16) 100%),
    linear-gradient(to right, #b4b4b4 0, #9c9c9c 130px, #7b7b7b 300px, #6d6c6a 480px, #4a4644 640px, #57504a 800px, #423c3a 960px, #54342e 1010px, #3e302e 1100px, #533833 1170px, #2c2826 1250px, #222 1366px); }
.office-btn { position: absolute; left: 3px; top: 3px; width: 38px; height: 38px; z-index: 5; }
.qat { position: absolute; left: 37px; top: 2px; width: 96px; height: 22px; padding-left: 16px; display: flex; align-items: center; gap: 7px; border: 1px solid #8b8f94; border-left: 0; border-radius: 0 11px 11px 0; background: linear-gradient(#9a9ea4, #b7bbc0); }
.q-undo { margin-left: 2px; }
.q-more { position: absolute; left: 140px; top: 9px; }
.title { position: absolute; left: 538px; top: 5px; font-size: 12px; line-height: 16px; color: #101010; white-space: nowrap; text-shadow: 0 0 6px #fff, 0 0 6px #fff, 0 0 3px #fff; font-stretch: condensed; }
.winctl { position: absolute; right: 2px; top: 0; height: 18px; display: flex; border: 1px solid #3d3d3d; border-top: 0; border-radius: 0 0 4px 4px; overflow: hidden; box-shadow: 0 0 0 1px rgba(255,255,255,.35); }
.wc { height: 17px; display: flex; align-items: center; justify-content: center; }
.wc-min { width: 28px; background: linear-gradient(#a6a6a6, #7b7b7b); border-right: 1px solid #444; }
.wc-max { width: 27px; background: linear-gradient(#a6a6a6, #7b7b7b); border-right: 1px solid #444; }
.wc-close { width: 48px; background: linear-gradient(#d97a68, #b8341e 55%, #c9503a); }
.wc-dash { width: 11px; height: 3px; background: #fff; margin-top: 4px; }

/* tabs */
.tabs { height: 25px; flex: none; display: flex; align-items: flex-end; padding-left: 49px; background: #bfdbff; position: relative; color: #15428b; }
.tab { height: 23px; line-height: 22px; padding: 0 14.500px; color: #15428b; letter-spacing: .17px; white-space: nowrap; }
.tab.active { padding: 0 10px; margin-right: 0; background: linear-gradient(#f4f9fe, #dce9f8); border: 1px solid #9dbce0; border-bottom: 0; border-radius: 3px 3px 0 0; }
.help { position: absolute; right: 3px; top: 6px; }
.help-q { font: bold 11px "Liberation Sans", sans-serif; fill: #fff; }

/* ribbon */
.ribbon { height: 88px; flex: none; display: flex; gap: 4px; padding: 2px 2px 1px 3px; background: linear-gradient(#bfdbff, #bfdbff 70%, #cfe4fb); border-bottom: 1px solid #8ea9cf; }
.group { height: 85px; flex: none; display: flex; flex-direction: column; border: 1px solid #a7c3e6; border-radius: 3px; background: linear-gradient(#dfeafa, #d3e3f6 25%, #c7daf1 36%, #d7e5f7 100%); box-shadow: inset 0 0 0 1px rgba(255,255,255,.3); }
.g-clip { width: 83px; } .g-slides { width: 153px; } .g-font { width: 226px; margin-right: -1px; } .g-para { width: 331px; } .g-draw { width: 454px; } .g-edit { width: 95px; }
.g-body { flex: 1; display: flex; padding-top: 1px; min-height: 0; }
.g-label { height: 15px; flex: none; line-height: 15px; text-align: center; color: #3e6aaa; background: linear-gradient(#c0d6ef, #c8dcf3); position: relative; border-radius: 0 0 2px 2px; }
.g-clip .g-label { text-align: left; padding-left: 6px; }
.launch { position: absolute; right: 4px; top: 4px; width: 7px; height: 7px; border: 1px solid #8ba3c2; border-top-color: #fff; border-left-color: #fff; background: linear-gradient(135deg, transparent 50%, #7d95b6 50%); }
.dk { color: #15428b; }
.dis, .dis .big-text { color: #9a9a9a; }

.big { display: flex; flex-direction: column; align-items: center; flex: none; }
.big-ico { height: 38px; display: flex; align-items: center; justify-content: center; }
.big-text { height: 13px; line-height: 13px; white-space: nowrap; text-align: center; }
.caret { width: 0; height: 0; border: 3px solid transparent; border-top: 3px solid #3f5f92; border-bottom: 0; vertical-align: middle; margin-left: 2px; }
.caret.gr { border-top-color: #b0b4ba; }
.caret.bl { border-top-color: #3f6fb0; }
.b-paste { width: 50px; margin-left: 4px; }
.icol { display: flex; flex-direction: column; margin-left: 3px; width: 20px; }
.ico22 { height: 22px; display: flex; align-items: center; justify-content: center; }
.b-new { width: 44px; margin-left: 5px; }
.scol { display: flex; flex-direction: column; flex: none; }
.sm { height: 22px; display: flex; align-items: center; white-space: nowrap; }
.sm .caret { margin-left: 5px; }
.sm-ico { width: 19px; display: flex; align-items: center; justify-content: flex-start; flex: none; }
.g-slides .scol { margin-left: 4px; }

.rows { padding-top: 8px; display: flex; flex-direction: column; gap: 6px; flex: none; }
.g-body.rows { flex: 1; display: flex; }
.g-font .rows { padding-left: 2px; }
.row { display: flex; gap: 4px; height: 22px; align-items: stretch; flex: none; }
.combo { display: flex; align-items: center; justify-content: flex-end; background: #edf0f4; border: 1px solid #d6dfea; color: #a4a4a4; padding-right: 5px; font-size: 12px; }
.c-name { width: 104px; margin-right: -4px; }
.c-size { width: 39px; justify-content: space-between; padding-left: 4px; }
.bgrp { display: flex; border: 1px solid #a9c0de; border-radius: 3px; background: linear-gradient(#d9e6f6, #c8daf0 50%, #cfe0f4); box-shadow: inset 0 0 0 1px rgba(255,255,255,.4); }
.btn { display: flex; align-items: center; justify-content: center; flex: 1; border-right: 1px solid #c0d1e6; position: relative; color: #6f7682; }
.btn:last-child { border-right: 0; }
.bg-grow { width: 44px; } .bg-clear { width: 24px; }
.f-a1 { font: bold 14px "Liberation Serif", serif; color: #707783; }
.f-a2 { font: bold 11px "Liberation Serif", serif; color: #707783; }
.up { position: absolute; right: 2px; top: 3px; border: 3px solid transparent; border-bottom: 3px solid #8f96a0; border-top: 0; }
.up.dn { border-bottom: 0; border-top: 3px solid #8f96a0; }
.mini-a { font: 6px "Liberation Sans", sans-serif; fill: #555; }
.mini-b { font: bold 8px "Liberation Serif", serif; fill: #888; }
.mini-ab { font: 9px "Liberation Sans", sans-serif; fill: #333; }
.mini-ac { font: bold 8px "Liberation Sans", sans-serif; fill: #2f8f2f; }
.bg-fmt { width: 180px; } .bg-color { width: 35px; }
.w24 { width: 24px; flex: none; } .w32 { width: 32px; flex: none; } .w28 { flex: 1; }
.fb, .fbi, .fu, .fb2, .fs, .fa, .fav, .fcol { font-family: "Liberation Serif", serif; font-weight: bold; color: #6f7682; }
.fb { font-size: 13px; } .fbi { font-size: 13px; font-style: italic; } .fu { font-size: 13px; text-decoration: underline; }
.fs { font-size: 11px; font-weight: normal; text-decoration: line-through; } .fb2 { font-size: 14px; font-family: "Liberation Sans", sans-serif; }
.fa { font-size: 12px; }
.fav { font-size: 9px; line-height: 9px; text-align: center; font-weight: normal; }
.av { display: block; height: 4px; margin-top: 1px; border-top: 1px solid #8f96a0; border-bottom: 0; }
.fcol { font-size: 16px; line-height: 15px; border-bottom: 3px solid #b0aca6; padding: 0 2px; font-family: "Liberation Sans", sans-serif; }

.para { padding-left: 3px; }
.rp { gap: 3px; }
.bg-list { width: 66px; margin-left: 0; } .bg-ind { width: 45px; } .bg-ls { width: 32px; }
.bg-align { width: 92px; } .bg-cols { width: 32px; }
.sc-p { margin-left: 3px; }
.sc-p .sm-ico { width: 19px; }

.draw { padding-left: 4px; }
.gallery { display: flex; height: 58px; margin-top: 4px; width: 137px; border: 1px solid #bdd2ec; flex: none; background: rgba(231,240,250,.5); }
.shapes { flex: none; margin-left: -1px; margin-top: -1px; }
.gscroll { flex: 1; display: flex; flex-direction: column; }
.gs { flex: 1; display: flex; align-items: center; justify-content: center; background: linear-gradient(#e3edf9, #cbdcf1); border: 1px solid #bdd2ec; }
.up2 { border: 4px solid transparent; border-bottom: 4px solid #b0b4ba; border-top: 0; }
.barred { position: relative; }
.barred::before { content: ""; position: absolute; left: -3px; top: -6px; width: 6px; height: 1px; background: #3f6fb0; }
.b-arr { width: 74px; margin-left: 4px; }
.b-arr .big-text { letter-spacing: .4px; }
.b-sty { width: 84px; margin-left: 2px; }
.sc-d { margin-left: 5px; }
.si16 { width: 19px; }
.sc-e { margin-left: 4px; }

/* main */
.main { flex: 1; min-height: 0; display: flex; position: relative; background: linear-gradient(#a6c4ea 0, #97b8e2 18%, #6f97c8 62%, #5b86bd 82%, #5b86bd 100%); }
.sweep { position: absolute; left: 0; top: 0; pointer-events: none; }
.panel { width: 143px; flex: none; display: flex; position: relative; }
.pcol { width: 137px; display: flex; flex-direction: column; }
.pstrip { width: 6px; background: #b3ccef; border-left: 1px solid #8eaedc; border-right: 1px solid #8eaedc; }
.ptabs { height: 24px; flex: none; display: flex; position: relative; align-items: flex-end; padding-left: 1px; border-bottom: 1px solid #9ab8de; background: linear-gradient(#c5d9f3, #b5cdee); }
.ptab { height: 21px; display: flex; align-items: center; border: 1px solid #86a5cf; border-bottom: 0; border-radius: 3px 4px 0 0; clip-path: polygon(0 0, 78% 0, 100% 100%, 0 100%); }
.ptab-a { width: 52px; padding-left: 8px; background: linear-gradient(#eef5fd, #cfe0f6); z-index: 2; }
.ptab-b { width: 56px; margin-left: -2px; padding-left: 7px; background: linear-gradient(#c7dbf5, #a9c6ec); }
.pclose { position: absolute; right: 5px; top: 6px; font: bold 11px "DejaVu Sans", sans-serif; color: #3d5c8a; }
.pbody { flex: 1; min-height: 0; display: flex; }
.tlist { flex: 1; min-width: 0; overflow: hidden; padding: 3px 7px 0 3px; }
.titem { height: 80px; padding: 5px 0 7px 20px; position: relative; width: 113px; }
.titem.sel { background: linear-gradient(#eaaa66 0, #e9a45e 30%, #e27f28 38%, #e17c25 100%); box-shadow: inset 0 0 0 1px #b8742e; }
.thumb { display: block; box-shadow: 0 0 0 1px #555, 2px 2px 3px rgba(20,40,80,.5); filter: blur(.3px); }
.tnum { position: absolute; left: 5px; top: 10px; font: bold 12px "DejaVu Sans", sans-serif; color: #fff; text-shadow: 1px 1px 1px #49648f; }
.sel .tnum { left: 0; font-size: 12px; }
.tt { font: bold 5px "Liberation Sans", sans-serif; fill: #111; }
.tx { font: 2.800px "Liberation Sans", sans-serif; fill: #000; }
.tc { text-anchor: middle; }
.b { font-weight: bold; }
.blu { fill: #1f497d; }
.tb rect { fill: #fff; stroke: #0060c0; stroke-width: 1.100; }
.tl text { font: bold 2.400px "Liberation Sans", sans-serif; fill: #000; }
.tr { fill: none; stroke: #c0393b; stroke-width: 1; }
.tg { fill: none; stroke: #3d7fca; stroke-width: 1.200; }

.vs { flex: none; position: relative; }
.vs-p { width: 14px; background: linear-gradient(to right, #8faed7, #7d9dca); }
.sa-up { position: absolute; left: 50%; margin-left: -4px; top: 9px; border: 4px solid transparent; border-bottom: 4px solid #3d4f70; border-top: 0; }
.sa-dn { position: absolute; left: 50%; margin-left: -4px; bottom: 9px; border: 4px solid transparent; border-top: 4px solid #3d4f70; border-bottom: 0; }
.sa-up.g { border-bottom-color: #98a9bf; top: 10px; } .sa-dn.g { border-top-color: #98a9bf; bottom: 5px; }
.th { position: absolute; left: 0; right: 0; display: flex; align-items: center; justify-content: center; border: 1px solid #5d7397; border-radius: 2px; background: linear-gradient(to right, #f5f6f8, #dfe3e8 50%, #c9ced5); }
.th-p { top: 102px; height: 112px; }
.th-m { top: 222px; height: 21px; }
.grip { width: 8px; height: 7px; background: repeating-linear-gradient(#626b78 0 1px, transparent 1px 2px); }

.work { flex: 1; min-width: 0; display: flex; flex-direction: column; position: relative; }
.work-top { flex: 1; min-height: 0; display: flex; }
.editor { flex: 1; min-width: 0; display: flex; align-items: center; justify-content: center; padding-top: 3px; }
.vs-m { width: 16px; background: linear-gradient(#8cabd7, #7a9bc9 60%, #7a9bc9); border-left: 1px solid #a5c1ea; }
.navz { position: absolute; left: -1px; right: 0; bottom: 0; height: 52px; background: #a9c6ef; }
.nv { position: absolute; left: 4px; width: 9px; height: 10px; }
.nv::before, .nv::after { content: ""; position: absolute; left: 0; width: 0; height: 0; border-left: 4.500px solid transparent; border-right: 4.500px solid transparent; }
.nv-u { top: 9px; }
.nv-u::before { top: 0; border-bottom: 4px solid #111; }
.nv-u::after { top: 5px; border-bottom: 4px solid #111; }
.nv-d { top: 24px; }
.nv-d::before { top: 0; border-top: 4px solid #111; }
.nv-d::after { top: 5px; border-top: 4px solid #111; }
.split { height: 6px; flex: none; background: #b7d3fb; border-top: 1px solid #cfe1fb; border-bottom: 1px solid #6f97cf; }
.notes-row { height: 30px; flex: none; display: flex; }
.notes { flex: 1; background: #fff; padding-left: 11px; font-size: 15px; line-height: 31px; color: #222; }
.vs-n { width: 16px; background: #c3d5ec; }

/* slide */
.slide { width: 480px; height: 360px; flex: none; position: relative; background: #fff; box-shadow: 2px 3px 5px rgba(20,40,90,.7); font-family: "Liberation Sans", sans-serif; font-stretch: normal; color: #000; overflow: hidden; }
.sbar { position: absolute; left: 0; top: 0; bottom: 0; width: 20px; background: #0bbfef; }
.sbar i { display: block; margin-top: 100px; height: 93px; background: #0060c0; }
.s-title { position: absolute; left: 0; right: 0; margin: 0; top: 9px; text-align: center; font-size: 23.100px; line-height: 30px; font-weight: bold; color: #1f497d; text-shadow: 1px 1px 1px rgba(130,150,190,.5); padding-left: 3px; }
.s-def { position: absolute; left: 27px; top: 43px; width: 438px; height: 44px; margin: 0; border: 2px solid #0060c0; padding: 1px 5px 0 4px; font-size: 14.600px; line-height: 18px; text-align: justify; text-indent: 19px; }
.s-def b { font-style: italic; }
.node { position: absolute; background: #e5f8fd; border: 5px double #3f80c8; border-radius: 9px; display: flex; align-items: center; justify-content: center; text-align: center; font-size: 14.500px; line-height: 18px; }
.n-text { left: 60px; top: 115px; width: 95px; height: 43px; padding-right: 2px; }
.n-num { left: 193px; top: 115px; width: 94px; height: 43px; padding-right: 5px; }
.n-form { left: 322px; top: 115px; width: 94px; height: 43px; padding-right: 2px; }
.n-seq { left: 31px; top: 179px; width: 162px; height: 70px; font-size: 14.700px; line-height: 19px; padding-bottom: 1px; }
.n-expr { left: 278px; top: 179px; width: 191px; height: 66px; align-items: flex-start; font-size: 14.500px; padding-top: 0; }
.n-dec { left: 122px; top: 273px; width: 237px; height: 56px; }
.arrows { position: absolute; left: 0; top: 0; pointer-events: none; }
.ar-o { fill: #4a88cc; stroke: #4a88cc; stroke-width: 3; stroke-linejoin: round; }
.ar-i { fill: none; stroke: #d5e8f8; stroke-width: 1; }
.ar-big { fill: #3d7fca; stroke: #3d7fca; stroke-width: 3.500; }
.ar-big2 { fill: #fff; stroke: #cfe3f6; stroke-width: 1; }

.sheet { position: absolute; display: grid; background: #fff; border: 3px solid #3b7cc4; font-size: 7.500px; overflow: hidden; box-shadow: 0 0 0 1px rgba(59,124,196,.4); }
.sheet .h { background: #ece9d8; border-right: 1px solid #c8c5b2; border-bottom: 1px solid #c8c5b2; display: flex; align-items: center; justify-content: center; color: #444; line-height: 1; }
.sheet .rn { align-items: flex-end; padding-bottom: 1px; }
.sheet .og { background: #f9b65e; border-color: #c99550; }
.sheet .c { border-right: 1px solid #dcdcdc; border-bottom: 1px solid #dcdcdc; color: #000; display: flex; align-items: center; white-space: nowrap; position: relative; }
.sheet .val { font-size: 13px; padding: 0 2px; }
.sheet .r { justify-content: flex-end; }
.sh1 { left: 22px; top: 195px; width: 195px; height: 42px; padding: 0; grid-template-columns: 13px repeat(6, 29.500px); grid-template-rows: 11px 18px 9px; }
.sh1 .wide { grid-column: span 6; font-size: 12.500px; padding-left: 31px; }
.sh2 { left: 275px; top: 192px; width: 195px; height: 52px; grid-template-columns: 15px 32px 32px 31px 45px 32px; grid-template-rows: 10px 8px 17px 11px; padding-left: 3px; }
.sh2 .val { font-size: 14px; }
.sh2 .act { font-size: 13.500px; padding-left: 1px; box-shadow: inset 1px 0 0 #444, inset 0 -1px 0 #444; overflow: visible; }
.fbar { grid-column: 1 / -1; display: flex; align-items: center; background: #fff; position: relative; font-size: 7px; color: #333; }
.nm { width: 48px; height: 10px; background: #e4e4e4; text-align: center; line-height: 10px; }
.dd { width: 8px; height: 10px; background: #9fbef0; }
.fx { margin-left: 31px; }
.sh3 { left: 164px; top: 272px; width: 162px; height: 47px; grid-template-columns: 14px 32px 32px 32px 45px; grid-template-rows: 8px 18px 8px 8px; padding-left: 1px; }
.bl1 { box-shadow: inset 0 0 0 1px #4a4af0; }
.gr1 { box-shadow: inset 0 0 0 1px #36a83e; }
.act { box-shadow: inset 0 0 0 2px #333; }
.sheet em { font-style: normal; }
.fa1 { color: #000; } .fb1 { color: #2020f0; } .fc1 { color: #118a1e; }

/* status */
.status { height: 21px; flex: none; display: flex; align-items: stretch; color: #2e4f87; border-bottom: 1px solid #40506a; background: linear-gradient(#dbe9fc, #cfe1fb 30%, #b0cdf4 36%, #b6d1f5 60%, #d0e2fb 100%); }
.st { display: flex; align-items: center; padding-left: 8px; border-right: 1px solid #a7c3e8; box-shadow: 1px 0 0 #e8f1fd; }
.st1 { width: 94px; } .st2 { width: 85px; padding-left: 9px; white-space: nowrap; } .st3 { width: 0; padding: 0; border: 0; box-shadow: none; overflow: visible; margin-left: 8px; }
.st3 svg { flex: none; }
.st4 { width: 134px; padding-left: 41px; margin-left: -8px; white-space: nowrap; }
.st-fill { flex: 1; }
.st-right { width: 265px; flex: none; display: flex; align-items: center; background: linear-gradient(#bcd4f5, #a9c6ef); border-left: 1px solid #7ea0cf; padding-left: 6px; }
.views { width: 56px; height: 18px; display: flex; border: 1px solid #8eaad0; border-radius: 3px; background: linear-gradient(#dfeafa, #b8d0f0); }
.vw { flex: 1; display: flex; align-items: center; justify-content: center; border-right: 1px solid #a9c3e4; }
.vw:last-child { border-right: 0; }
.vw.on { background: linear-gradient(#f2f7fd, #c9dcf5); }
.zoomv { margin-left: 8px; color: #15428b; width: 26px; font-size: 11.500px; }
.zbtn { width: 17px; height: 17px; border-radius: 50%; margin-left: 4px; border: 1px solid #5d7ca8; background: radial-gradient(circle at 50% 30%, #fff, #b8cde8); color: #3c4f6d; font: bold 15px/14px "Liberation Sans", sans-serif; text-align: center; }
.slider { width: 99px; height: 1px; background: #7d9ac4; box-shadow: 0 1px 0 #e0ebfa; margin: 0 1px; position: relative; }
.slider + .zbtn { margin-left: 0; }
.tick { position: absolute; left: 49px; top: -3px; width: 1px; height: 7px; background: #8da8cf; }
.knob { position: absolute; left: 18px; top: -7px; width: 9px; height: 14px; background: linear-gradient(#f2f6fc, #c4d6ef); border: 1px solid #5d7ca8; clip-path: polygon(0 0, 100% 0, 100% 65%, 50% 100%, 0 65%); }
.fit { width: 18px; height: 18px; margin-left: 7px; display: flex; align-items: center; justify-content: center; background: linear-gradient(#d9e7f8, #b6cfee); border: 1px solid #8eaad0; border-radius: 3px; }

/* taskbar */
.taskbar { height: 40px; flex: none; display: flex; align-items: center; position: relative; color: #fff; font-family: "Noto Sans", sans-serif; font-stretch: normal;
  background:
    linear-gradient(to bottom, rgba(255,255,255,.1), rgba(255,255,255,0) 30%),
    linear-gradient(to right, #1b1a19 0, #2b2723 70px, #3b352f 180px, #5e5a4c 250px, #6b6757 420px, #8b8864 548px, #8b8860 610px, #3b3b3c 640px, #2d2f35 720px, #6d5949 760px, #7e6a58 860px, #88705f 960px, #6d5044 1000px, #2a2630 1020px, #1d1c24 1100px, #1a191e 1366px); }
.orb { position: absolute; left: 8px; top: 1px; }
.tk { position: absolute; top: 4px; }
.ti-e { left: 73px; } .ti-f { left: 135px; top: 5px; } .ti-m { left: 197px; top: 7px; }
.tbtn { position: absolute; top: 2px; height: 36px; display: flex; align-items: center; justify-content: center; border: 1px solid rgba(255,255,255,.4); border-radius: 3px; background: linear-gradient(rgba(255,255,255,.22), rgba(255,255,255,.08)); box-shadow: inset 0 0 0 1px rgba(0,0,0,.25); }
.tb-y { left: 246px; width: 58px; } .tb-a { left: 308px; width: 58px; } .tb-w { left: 370px; width: 51px; }
.tsep { position: absolute; left: 422px; top: 2px; width: 8px; height: 36px; border-left: 1px solid rgba(255,255,255,.3); border-right: 1px solid rgba(255,255,255,.3); }
.tb-7 { left: 432px; width: 58px; } .tb-p { left: 494px; width: 54px; background: linear-gradient(rgba(255,255,255,.55), rgba(255,255,255,.3)); }
.sevenz { width: 31px; height: 26px; background: #000; border: 3px solid #fff; color: #fff; font: bold 17px/19px "Liberation Sans", sans-serif; text-align: center; }
.av-a { font: bold 9px "Liberation Sans", sans-serif; fill: #555; }
.w-w { font: bold 10px "Liberation Sans", sans-serif; fill: #2f5fb0; }
.tk-fill { flex: 1; }
.tray { position: absolute; right: 0; top: 0; width: 238px; height: 40px; display: flex; align-items: center; }
.lang { position: absolute; left: 0; top: 8px; font-size: 12px; color: #ddd; line-height: 16px; }
.tr-up { position: absolute; left: 31px; top: 14px; }
.tr-i { position: absolute; top: 13px; }
.tr-i:nth-of-type(2) { left: 52px; } .tr-i:nth-of-type(3) { left: 77px; top: 11px; } .tr-i:nth-of-type(4) { left: 100px; top: 14px; } .tr-i:nth-of-type(5) { left: 125px; top: 11px; }
.clock { position: absolute; left: 154px; top: 4px; width: 60px; display: flex; flex-direction: column; align-items: center; font-size: 12px; line-height: 17px; }
.showd { position: absolute; right: 0; top: 1px; width: 14px; height: 39px; border: 1px solid rgba(255,255,255,.35); background: linear-gradient(rgba(255,255,255,.35), rgba(255,255,255,.2)); }
```
